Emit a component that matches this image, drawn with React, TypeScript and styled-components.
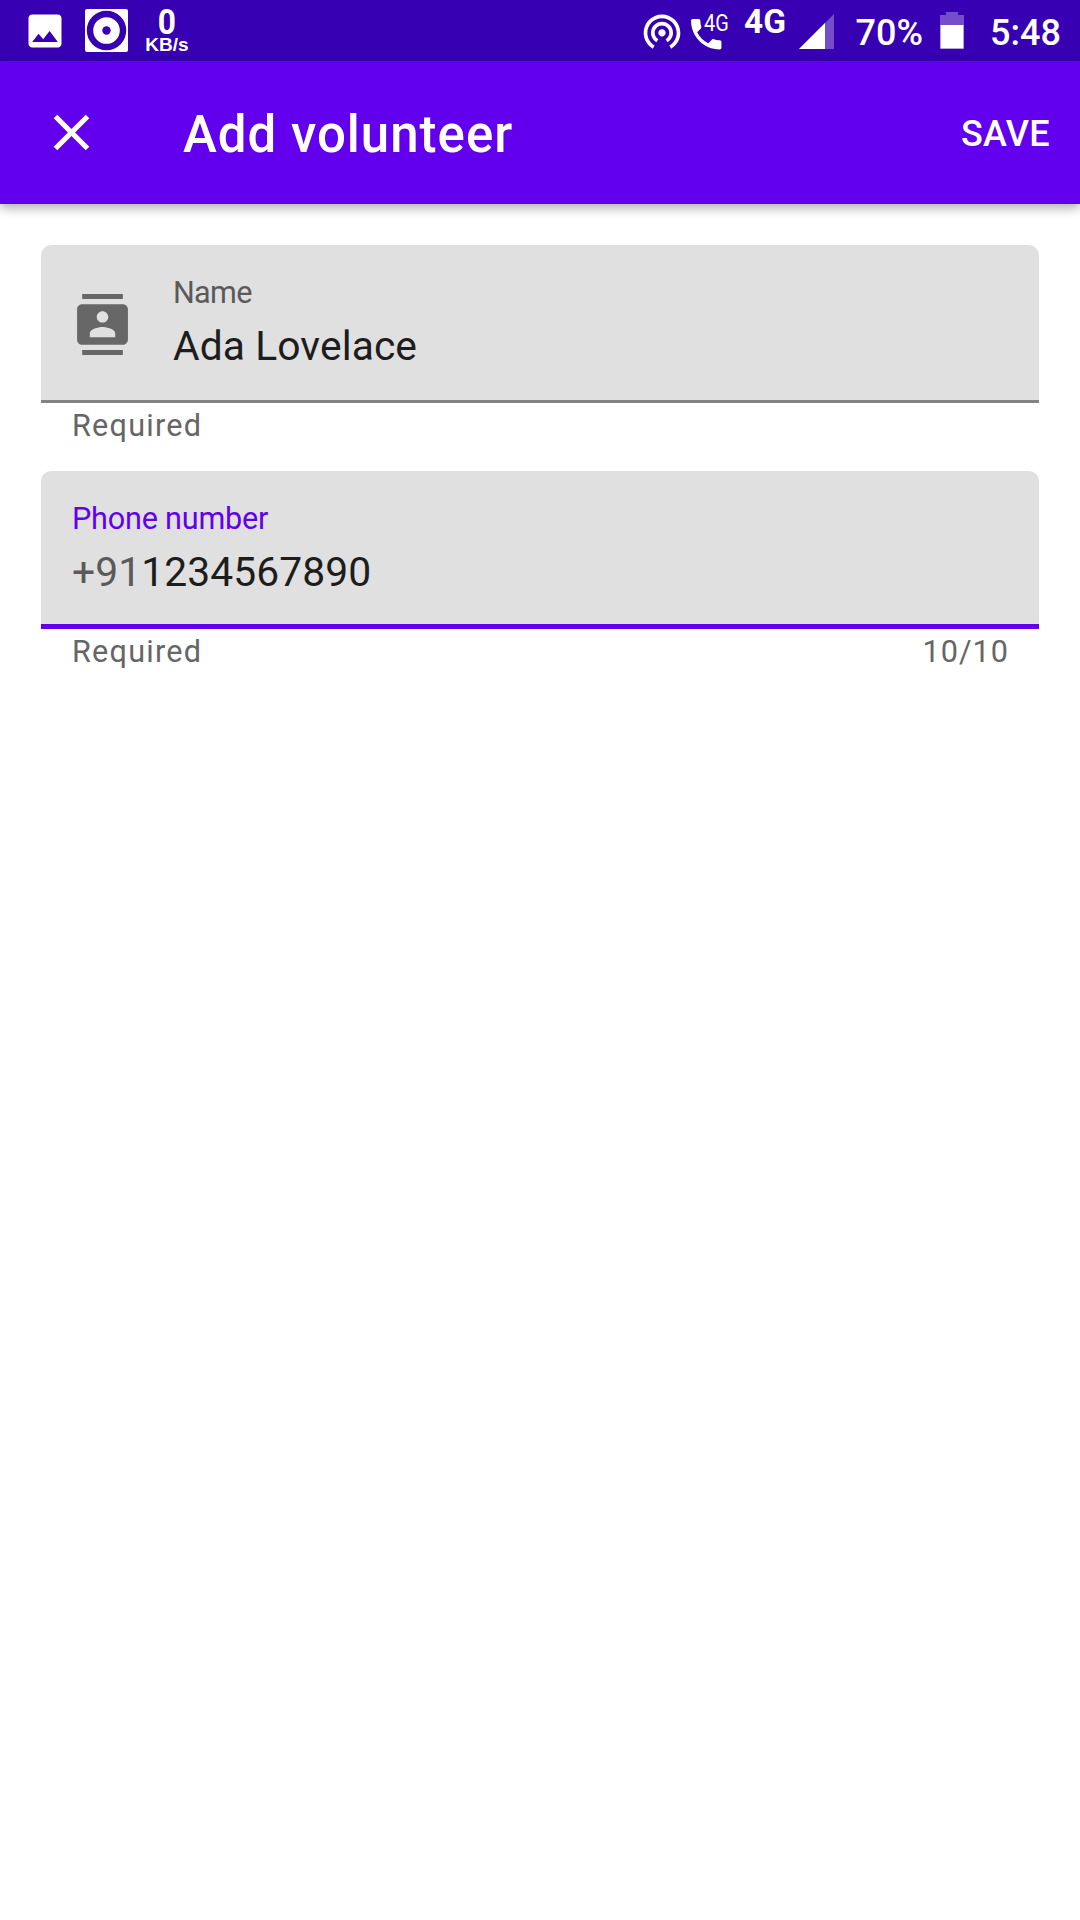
import React from 'react';
import styled, { createGlobalStyle } from 'styled-components';

const GlobalStyle = createGlobalStyle`
  * { box-sizing: border-box; }
  body {
    margin: 0;
    background: #fff;
    font-family: Roboto, "Liberation Sans", sans-serif;
  }
`;

const Screen = styled.div`
  display: flex;
  flex-direction: column;
  width: 1080px;
  height: 1920px;
  background: #fff;
  overflow: hidden;
`;

const StatusBar = styled.header`
  display: flex;
  justify-content: space-between;
  align-items: flex-start;
  height: 61px;
  background: #3700b3;
  color: #fff;
`;

const StatusGroup = styled.div`
  display: flex;
  align-items: flex-start;
`;

const StatusIcon = styled.svg<{ $left?: number; $top: number }>`
  display: block;
  flex: none;
  margin-left: ${(p) => p.$left ?? 0}px;
  margin-top: ${(p) => p.$top}px;
  fill: #fff;
`;

const NetSpeed = styled.div`
  display: flex;
  flex-direction: column;
  align-items: center;
  width: 44px;
  margin-left: 17px;
  padding-top: 6px;
  font-family: "Liberation Sans", sans-serif;
  font-weight: 700;
`;

const SpeedValue = styled.span`
  font-family: Roboto, sans-serif;
  font-size: 34.5px;
  line-height: 32px;
  transform: scaleX(0.92);
`;

const SpeedUnit = styled.span`
  font-size: 19px;
  line-height: 13px;
`;

const CallIndicator = styled.div`
  display: flex;
  align-items: flex-start;
  width: 43px;
  margin-left: 2.5px;
`;

const CallNetwork = styled.span`
  margin: 9px 0 0 -23px;
  font-size: 24px;
  line-height: 28px;
  transform: scaleX(0.83);
  transform-origin: left;
`;

const NetworkType = styled.span`
  width: 42px;
  margin-left: 15px;
  margin-top: 3px;
  font-size: 33.4px;
  line-height: 38px;
  font-weight: 700;
`;

const StatusText = styled.span<{ $left: number; $width: number }>`
  width: ${(p) => p.$width}px;
  margin-left: ${(p) => p.$left}px;
  margin-top: 12px;
  font-size: 36px;
  line-height: 43px;
  font-weight: 500;
  white-space: nowrap;
`;

const AppBar = styled.nav`
  display: flex;
  align-items: center;
  flex: none;
  height: 143px;
  padding: 0 30px 0 41px;
  background: #6200ee;
  color: #fff;
  box-shadow: 0 4px 10px rgba(0, 0, 0, 0.32);
`;

const IconButton = styled.button`
  display: flex;
  padding: 0;
  border: 0;
  background: none;
  color: inherit;
`;

const Title = styled.h1`
  flex: 1;
  margin: 0 0 0 81px;
  padding-top: 4px;
  font-size: 51px;
  line-height: 60px;
  font-weight: 500;
  letter-spacing: 1px;
`;

const TextButton = styled.button`
  padding: 2px 0 0;
  border: 0;
  background: none;
  color: inherit;
  font: 500 36px/42px Roboto, sans-serif;
  letter-spacing: 0.3px;
`;

const Form = styled.form`
  display: flex;
  flex-direction: column;
  padding: 41px 41px 0;
`;

const FieldGroup = styled.div`
  display: flex;
  flex-direction: column;
  height: 226px;
`;

const FieldBox = styled.label<{ $active?: boolean }>`
  display: flex;
  height: 158px;
  padding-left: 31px;
  border-radius: 10px 10px 0 0;
  background: #e0e0e0;
  box-shadow: inset 0 ${(p) => (p.$active ? '-5px #6200ee' : '-3px #828282')};
`;

const FieldIcon = styled.svg`
  align-self: center;
  flex: none;
  margin-right: 40px;
  fill: #676767;
`;

const FieldText = styled.span`
  display: flex;
  flex-direction: column;
`;

const FieldLabel = styled.span<{ $active?: boolean }>`
  margin-top: 30px;
  font-size: 30.6px;
  line-height: 36px;
  letter-spacing: ${(p) => (p.$active ? '-0.2px' : '-0.7px')};
  color: ${(p) => (p.$active ? '#6200ee' : '#5a5a5a')};
`;

const FieldValue = styled.span`
  margin-top: 11px;
  font-size: 40.8px;
  line-height: 48px;
  letter-spacing: 0.08px;
  color: #1d1d1d;
`;

const Prefix = styled.span`
  color: #5a5a5a;
`;

const HelperRow = styled.div`
  display: flex;
  justify-content: space-between;
  padding: 5px 30px 0 31px;
  font-size: 30.6px;
  line-height: 36px;
  letter-spacing: 1.25px;
  color: #666;
`;

const Counter = styled.span`
  letter-spacing: 1.02px;
`;

const ContactsIcon = () => (
  <FieldIcon width="61" height="61" viewBox="0 0 24 24">
    <path d="M20 0H4v2h16V0zM4 24h16v-2H4v2zM20 4H4c-1.1 0-2 .9-2 2v12c0 1.1.9 2 2 2h16c1.1 0 2-.9 2-2V6c0-1.1-.9-2-2-2zm-8 2.75c1.24 0 2.25 1.01 2.25 2.25s-1.01 2.25-2.25 2.25S9.75 10.24 9.75 9 10.76 6.75 12 6.75zM17 17H7v-1.5c0-1.67 3.33-2.5 5-2.5s5 .83 5 2.5V17z" />
  </FieldIcon>
);

interface FieldProps {
  label: string;
  value: string;
  prefix?: string;
  helper: string;
  counter?: string;
  active?: boolean;
  icon?: React.ReactNode;
}

const Field = ({ label, value, prefix, helper, counter, active, icon }: FieldProps) => (
  <FieldGroup>
    <FieldBox $active={active}>
      {icon}
      <FieldText>
        <FieldLabel $active={active}>{label}</FieldLabel>
        <FieldValue>
          {prefix && <Prefix>{prefix}</Prefix>}
          {value}
        </FieldValue>
      </FieldText>
    </FieldBox>
    <HelperRow>
      <span>{helper}</span>
      {counter && <Counter>{counter}</Counter>}
    </HelperRow>
  </FieldGroup>
);

export default function App() {
  return (
    <Screen>
      <GlobalStyle />
      <StatusBar>
        <StatusGroup>
          <StatusIcon $left={23.4} $top={8.5} width="44" height="44" viewBox="0 0 24 24">
            <path d="M21 19V5c0-1.1-.9-2-2-2H5c-1.1 0-2 .9-2 2v14c0 1.1.9 2 2 2h14c1.1 0 2-.9 2-2zM8.5 13.5l2.5 3.01L14.5 12l4.5 6H5l3.5-4.5z" />
          </StatusIcon>
          <StatusIcon $left={17.6} $top={9} width="43" height="43" viewBox="0 0 43 43">
            <rect width="43" height="43" rx="2" />
            <circle cx="21.5" cy="21.5" r="16.5" fill="none" stroke="#3700b3" strokeWidth="6.4" />
            <circle cx="21.5" cy="21.5" r="4.2" fill="#3700b3" />
          </StatusIcon>
          <NetSpeed>
            <SpeedValue>0</SpeedValue>
            <SpeedUnit>KB/s</SpeedUnit>
          </NetSpeed>
        </StatusGroup>
        <StatusGroup>
          <StatusIcon $top={8.5} width="44" height="44" viewBox="0 0 24 24">
            <path d="M12 11c-1.1 0-2 .9-2 2s.9 2 2 2 2-.9 2-2-.9-2-2-2zm6 2c0-3.31-2.69-6-6-6s-6 2.69-6 6c0 2.22 1.21 4.15 3 5.19l1-1.74c-1.19-.7-2-1.97-2-3.45 0-2.21 1.79-4 4-4s4 1.79 4 4c0 1.48-.81 2.75-2 3.45l1 1.74c1.79-1.04 3-2.97 3-5.19zM12 3C6.48 3 2 7.48 2 13c0 3.7 2.01 6.92 4.99 8.65l1-1.73C5.61 18.53 4 15.96 4 13c0-4.42 3.58-8 8-8s8 3.58 8 8c0 2.96-1.61 5.53-4 6.92l1 1.73c2.99-1.73 5-4.95 5-8.65 0-5.52-4.48-10-10-10z" />
          </StatusIcon>
          <CallIndicator>
            <StatusIcon $top={14.3} width="40.5" height="40.5" viewBox="0 0 24 24">
              <path d="M20 15.5c-1.25 0-2.45-.2-3.57-.57-.35-.11-.74-.03-1.02.24l-2.2 2.2c-2.83-1.44-5.15-3.75-6.59-6.59l2.2-2.21c.28-.26.36-.65.25-1C8.7 6.45 8.5 5.25 8.5 4c0-.55-.45-1-1-1H4c-.55 0-1 .45-1 1 0 9.39 7.61 17 17 17 .55 0 1-.45 1-1v-3.5c0-.55-.45-1-1-1z" />
            </StatusIcon>
            <CallNetwork>4G</CallNetwork>
          </CallIndicator>
          <NetworkType>4G</NetworkType>
          <StatusIcon $left={13} $top={14} width="35" height="35" viewBox="0 0 35 35">
            <path d="M0 35L35 0V35z" opacity="0.3" />
            <path d="M0 35L26 9V35z" />
          </StatusIcon>
          <StatusText $left={21.5} $width={67}>70%</StatusText>
          <StatusIcon $left={17.5} $top={12} width="24" height="37" viewBox="0 0 24 37">
            <path d="M6 0H18V3H24V37H0V3H6z" opacity="0.3" />
            <path d="M0.5 13H23.5V36.5H0.5z" />
          </StatusIcon>
          <StatusText $left={26} $width={90}>5:48</StatusText>
        </StatusGroup>
      </StatusBar>
      <AppBar>
        <IconButton aria-label="Close">
          <svg width="61" height="61" viewBox="0 0 24 24" fill="currentColor">
            <path d="M19 6.41L17.59 5 12 10.59 6.41 5 5 6.41 10.59 12 5 17.59 6.41 19 12 13.41 17.59 19 19 17.59 13.41 12z" />
          </svg>
        </IconButton>
        <Title>Add volunteer</Title>
        <TextButton>SAVE</TextButton>
      </AppBar>
      <Form>
        <Field label="Name" value="Ada Lovelace" helper="Required" icon={<ContactsIcon />} />
        <Field label="Phone number" prefix="+91" value="1234567890" helper="Required" counter="10/10" active />
      </Form>
    </Screen>
  );
}
